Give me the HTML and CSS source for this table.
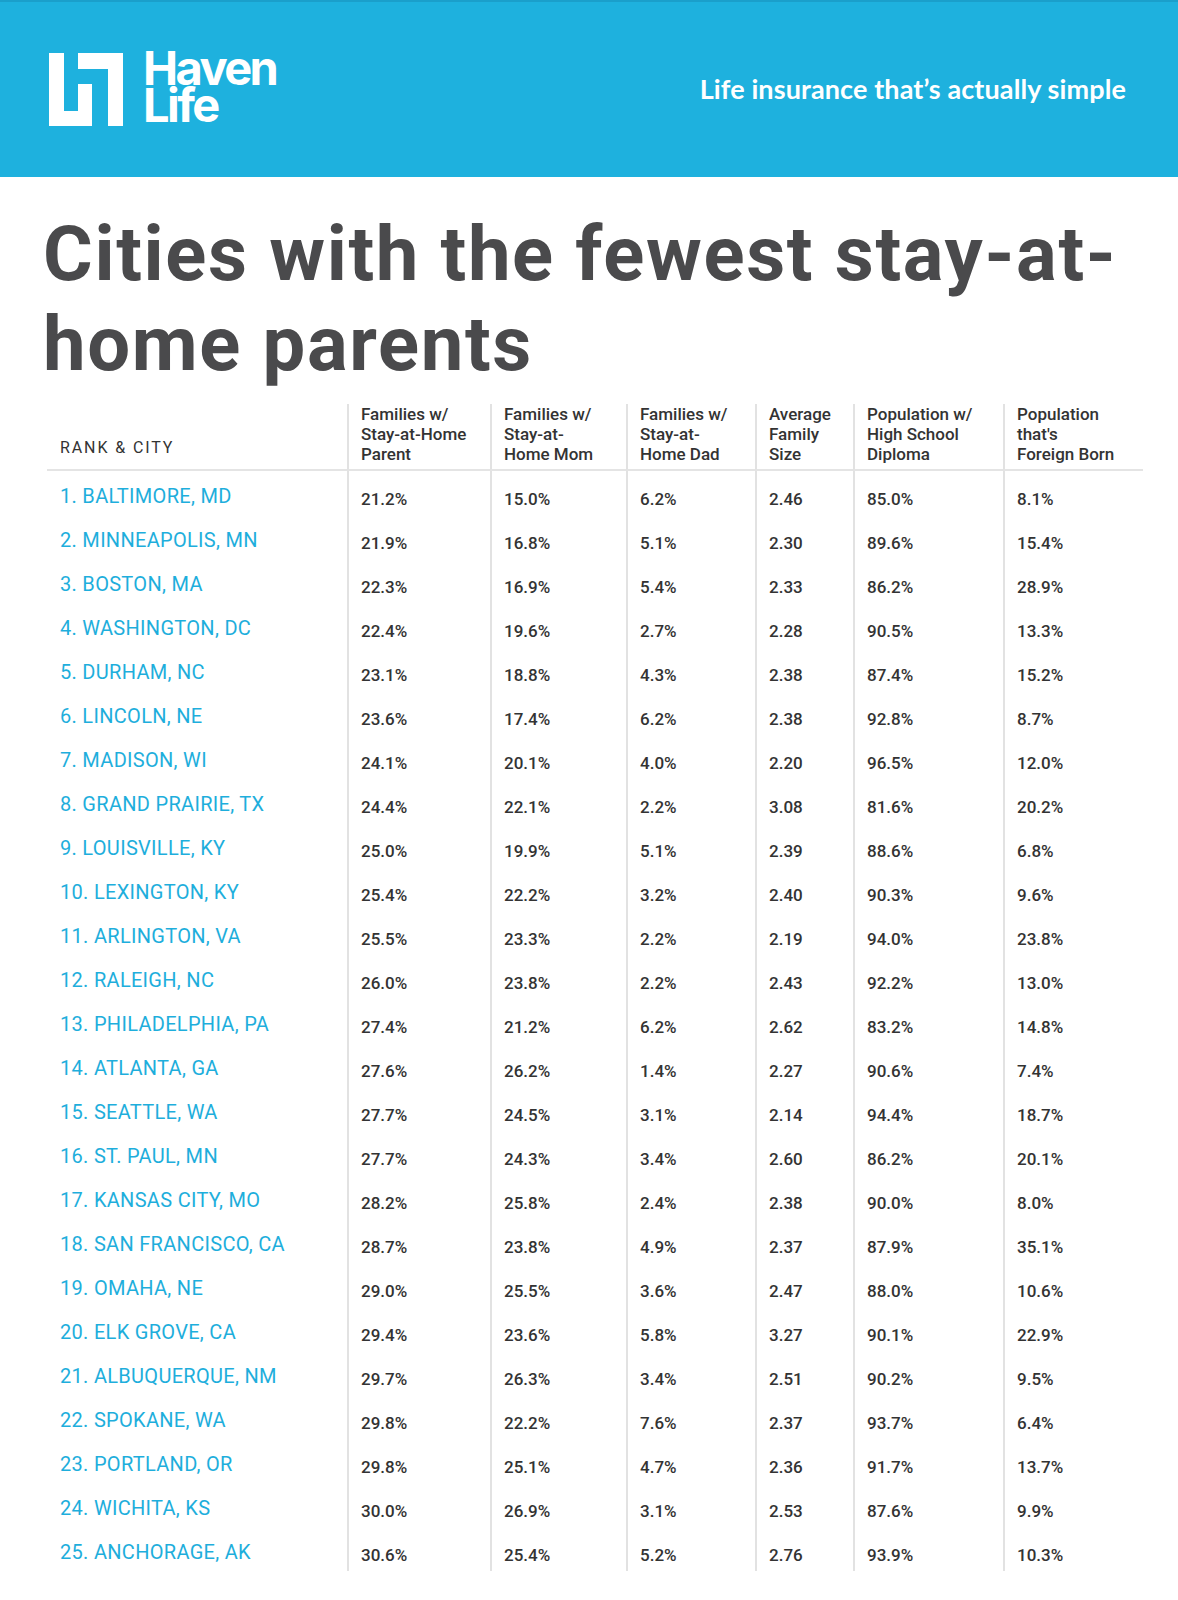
FILE: index.html
```html
<!DOCTYPE html>
<html lang="en">
<head>
<meta charset="utf-8">
<title>Cities with the fewest stay-at-home parents</title>
<link rel="stylesheet" href="styles.css">
</head>
<body>
<header class="topbar">
  <div class="brand">
    <svg class="brand-mark" viewBox="0 0 74 73" width="74" height="73" aria-hidden="true">
      <rect x="0" y="0" width="15" height="73" fill="#fff"/>
      <rect x="0" y="58" width="43" height="15" fill="#fff"/>
      <rect x="29" y="31" width="14" height="42" fill="#fff"/>
      <rect x="29" y="0" width="45" height="16" fill="#fff"/>
      <rect x="59" y="0" width="15" height="73" fill="#fff"/>
    </svg>
    <div class="brand-name"><span class="brand-line">Haven</span><span class="brand-line">Life</span></div>
  </div>
  <div class="tagline">Life insurance that’s actually simple</div>
</header>

<main class="content">
  <h1 class="title">Cities with the fewest stay-at-home parents</h1>

  <div class="table">
    <div class="th th-city">RANK &amp; CITY</div>
    <div class="th">Families w/<br>Stay-at-Home<br>Parent</div>
    <div class="th">Families w/<br>Stay-at-<br>Home Mom</div>
    <div class="th">Families w/<br>Stay-at-<br>Home Dad</div>
    <div class="th">Average<br>Family<br>Size</div>
    <div class="th">Population w/<br>High School<br>Diploma</div>
    <div class="th">Population<br>that's<br>Foreign Born</div>

    <div class="td city">1. BALTIMORE, MD</div><div class="td">21.2%</div><div class="td">15.0%</div><div class="td">6.2%</div><div class="td">2.46</div><div class="td">85.0%</div><div class="td">8.1%</div>
    <div class="td city">2. MINNEAPOLIS, MN</div><div class="td">21.9%</div><div class="td">16.8%</div><div class="td">5.1%</div><div class="td">2.30</div><div class="td">89.6%</div><div class="td">15.4%</div>
    <div class="td city">3. BOSTON, MA</div><div class="td">22.3%</div><div class="td">16.9%</div><div class="td">5.4%</div><div class="td">2.33</div><div class="td">86.2%</div><div class="td">28.9%</div>
    <div class="td city">4. WASHINGTON, DC</div><div class="td">22.4%</div><div class="td">19.6%</div><div class="td">2.7%</div><div class="td">2.28</div><div class="td">90.5%</div><div class="td">13.3%</div>
    <div class="td city">5. DURHAM, NC</div><div class="td">23.1%</div><div class="td">18.8%</div><div class="td">4.3%</div><div class="td">2.38</div><div class="td">87.4%</div><div class="td">15.2%</div>
    <div class="td city">6. LINCOLN, NE</div><div class="td">23.6%</div><div class="td">17.4%</div><div class="td">6.2%</div><div class="td">2.38</div><div class="td">92.8%</div><div class="td">8.7%</div>
    <div class="td city">7. MADISON, WI</div><div class="td">24.1%</div><div class="td">20.1%</div><div class="td">4.0%</div><div class="td">2.20</div><div class="td">96.5%</div><div class="td">12.0%</div>
    <div class="td city">8. GRAND PRAIRIE, TX</div><div class="td">24.4%</div><div class="td">22.1%</div><div class="td">2.2%</div><div class="td">3.08</div><div class="td">81.6%</div><div class="td">20.2%</div>
    <div class="td city">9. LOUISVILLE, KY</div><div class="td">25.0%</div><div class="td">19.9%</div><div class="td">5.1%</div><div class="td">2.39</div><div class="td">88.6%</div><div class="td">6.8%</div>
    <div class="td city">10. LEXINGTON, KY</div><div class="td">25.4%</div><div class="td">22.2%</div><div class="td">3.2%</div><div class="td">2.40</div><div class="td">90.3%</div><div class="td">9.6%</div>
    <div class="td city">11. ARLINGTON, VA</div><div class="td">25.5%</div><div class="td">23.3%</div><div class="td">2.2%</div><div class="td">2.19</div><div class="td">94.0%</div><div class="td">23.8%</div>
    <div class="td city">12. RALEIGH, NC</div><div class="td">26.0%</div><div class="td">23.8%</div><div class="td">2.2%</div><div class="td">2.43</div><div class="td">92.2%</div><div class="td">13.0%</div>
    <div class="td city">13. PHILADELPHIA, PA</div><div class="td">27.4%</div><div class="td">21.2%</div><div class="td">6.2%</div><div class="td">2.62</div><div class="td">83.2%</div><div class="td">14.8%</div>
    <div class="td city">14. ATLANTA, GA</div><div class="td">27.6%</div><div class="td">26.2%</div><div class="td">1.4%</div><div class="td">2.27</div><div class="td">90.6%</div><div class="td">7.4%</div>
    <div class="td city">15. SEATTLE, WA</div><div class="td">27.7%</div><div class="td">24.5%</div><div class="td">3.1%</div><div class="td">2.14</div><div class="td">94.4%</div><div class="td">18.7%</div>
    <div class="td city">16. ST. PAUL, MN</div><div class="td">27.7%</div><div class="td">24.3%</div><div class="td">3.4%</div><div class="td">2.60</div><div class="td">86.2%</div><div class="td">20.1%</div>
    <div class="td city">17. KANSAS CITY, MO</div><div class="td">28.2%</div><div class="td">25.8%</div><div class="td">2.4%</div><div class="td">2.38</div><div class="td">90.0%</div><div class="td">8.0%</div>
    <div class="td city">18. SAN FRANCISCO, CA</div><div class="td">28.7%</div><div class="td">23.8%</div><div class="td">4.9%</div><div class="td">2.37</div><div class="td">87.9%</div><div class="td">35.1%</div>
    <div class="td city">19. OMAHA, NE</div><div class="td">29.0%</div><div class="td">25.5%</div><div class="td">3.6%</div><div class="td">2.47</div><div class="td">88.0%</div><div class="td">10.6%</div>
    <div class="td city">20. ELK GROVE, CA</div><div class="td">29.4%</div><div class="td">23.6%</div><div class="td">5.8%</div><div class="td">3.27</div><div class="td">90.1%</div><div class="td">22.9%</div>
    <div class="td city">21. ALBUQUERQUE, NM</div><div class="td">29.7%</div><div class="td">26.3%</div><div class="td">3.4%</div><div class="td">2.51</div><div class="td">90.2%</div><div class="td">9.5%</div>
    <div class="td city">22. SPOKANE, WA</div><div class="td">29.8%</div><div class="td">22.2%</div><div class="td">7.6%</div><div class="td">2.37</div><div class="td">93.7%</div><div class="td">6.4%</div>
    <div class="td city">23. PORTLAND, OR</div><div class="td">29.8%</div><div class="td">25.1%</div><div class="td">4.7%</div><div class="td">2.36</div><div class="td">91.7%</div><div class="td">13.7%</div>
    <div class="td city">24. WICHITA, KS</div><div class="td">30.0%</div><div class="td">26.9%</div><div class="td">3.1%</div><div class="td">2.53</div><div class="td">87.6%</div><div class="td">9.9%</div>
    <div class="td city">25. ANCHORAGE, AK</div><div class="td">30.6%</div><div class="td">25.4%</div><div class="td">5.2%</div><div class="td">2.76</div><div class="td">93.9%</div><div class="td">10.3%</div>
  </div>
</main>
</body>
</html>
```

FILE: styles.css
```css
* { box-sizing: border-box; }

html, body {
  margin: 0;
  padding: 0;
  background: #ffffff;
}

body {
  font-family: Roboto, "Liberation Sans", sans-serif;
  color: #333333;
}

.topbar {
  height: 177px;
  background: #1eb1de;
  border-top: 2px solid #1a9fcb;
  display: flex;
  align-items: center;
  justify-content: space-between;
  padding: 0 52px 0 49px;
}

.brand {
  display: flex;
  align-items: center;
  gap: 20px;
}

.brand-mark {
  display: block;
  flex: none;
}

.brand-name {
  display: flex;
  flex-direction: column;
  font-family: Inter, "Liberation Sans", sans-serif;
  font-weight: 700;
  font-size: 47px;
  letter-spacing: -0.055em;
  color: #ffffff;
  margin-bottom: 8px;
}

.brand-line {
  display: block;
  line-height: 37px;
  height: 37px;
}

.tagline {
  font-family: Lato, "Liberation Sans", sans-serif;
  font-weight: 700;
  font-size: 27px;
  letter-spacing: 0.1px;
  color: #ffffff;
  margin-bottom: 2px;
}

.content {
  padding: 0 40px 40px 43px;
}

.title {
  margin: 32px 0 15px 0;
  font-family: Roboto, "Liberation Sans", sans-serif;
  font-weight: 700;
  font-size: 76px;
  line-height: 90px;
  color: #4a4a4c;
  letter-spacing: 1.65px;
  max-width: 1110px;
}

.table {
  display: grid;
  grid-template-columns: 300px 143px 136px 129px 98px 150px 140px;
  width: 1096px;
  margin-left: 4px;
}

.th {
  display: flex;
  align-items: flex-end;
  font-size: 17px;
  font-weight: 500;
  line-height: 20px;
  color: #333333;
  padding: 0 8px 5px 12px;
  border-bottom: 2px solid #e4e4e4;
  border-left: 2px solid #e2e2e2;
}

.th-city {
  border-left: none;
  font-size: 16px;
  font-weight: 400;
  letter-spacing: 1.9px;
  padding-left: 13px;
  padding-bottom: 11px;
}

.td {
  height: 44px;
  padding: 18px 12px 0 12px;
  font-size: 17px;
  font-weight: 500;
  line-height: 20px;
  color: #333333;
  border-left: 2px solid #e2e2e2;
  white-space: nowrap;
}

.td.city {
  border-left: none;
  padding-left: 13px;
  padding-top: 13px;
  font-size: 20px;
  font-weight: 400;
  line-height: 24px;
  letter-spacing: 0.3px;
  color: #1eaedc;
}
```
